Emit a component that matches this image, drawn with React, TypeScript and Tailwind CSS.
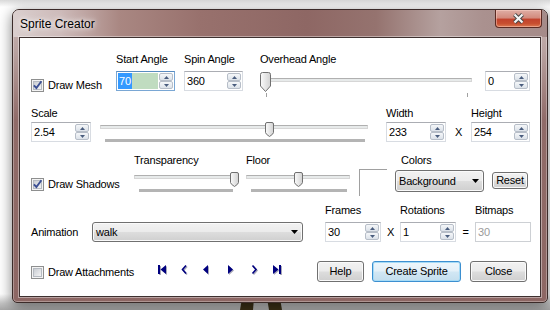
import React from 'react';

const face = 'bg-[linear-gradient(180deg,#f2f2f2_0%,#ebebeb_48%,#dddddd_52%,#cfcfcf_100%)]';

function CheckBox({ checked }: { checked?: boolean }) {
  return (
    <svg width="13" height="13" viewBox="0 0 13 13" className="shrink-0">
      <defs>
        <linearGradient id="cb-in" x1="0" y1="0" x2="1" y2="1">
          <stop offset="0" stopColor="#c6cad0" />
          <stop offset="1" stopColor="#f7f7f7" />
        </linearGradient>
      </defs>
      <rect x="0.5" y="0.5" width="12" height="12" fill="#f4f4f4" stroke="#8e8f8f" />
      <rect x="2.5" y="2.5" width="8" height="8" fill="url(#cb-in)" stroke="#b6bbc2" />
      {checked && <path d="M2.9 6.3 L5.4 9 L10.4 2.3" fill="none" stroke="#3b4f94" strokeWidth="1.9" />}
    </svg>
  );
}

function SpinButtons() {
  return (
    <div className="flex w-[15px] flex-col py-px pr-px">
      {['up', 'down'].map((d) => (
        <div
          key={d}
          className="flex h-[8px] items-center justify-center rounded-[2px] border border-[#b7bec8] bg-[linear-gradient(180deg,#f5f7f9,#dce2e9)]"
        >
          <svg width="5" height="3" viewBox="0 0 5 3">
            <path d={d === 'up' ? 'M0 3H5L2.5 0Z' : 'M0 0H5L2.5 3Z'} fill="#4a5d7e" />
          </svg>
        </div>
      ))}
    </div>
  );
}

function SpinBox({
  className,
  value,
  focused,
  disabled,
}: {
  className: string;
  value: string;
  focused?: boolean;
  disabled?: boolean;
}) {
  const border = focused
    ? 'border-[#7aa7d4] border-t-[#5a8cc0]'
    : disabled
      ? 'border-[#cdd0d4]'
      : 'border-[#d8dce2] border-t-[#abadb3]';
  return (
    <div className={`flex h-[20px] border bg-white ${border} ${className}`}>
      <div className="flex flex-1 p-px">
        <div className={`flex flex-1 items-center ${focused ? 'bg-[#c0dcc0]' : 'pl-px'}`}>
          {focused ? (
            <span className="flex h-full items-center bg-[#3399ff] px-px text-white">{value}</span>
          ) : (
            <span className={disabled ? 'text-[#9a9a9a]' : ''}>{value}</span>
          )}
        </div>
      </div>
      {!disabled && <SpinButtons />}
    </div>
  );
}

function Thumb({ big }: { big?: boolean }) {
  if (big) {
    return (
      <svg width="11" height="20" viewBox="0 0 11 20">
        <defs>
          <linearGradient id="th-big" x1="0" y1="0" x2="1" y2="0">
            <stop offset="0" stopColor="#fbfbfb" />
            <stop offset="1" stopColor="#d2d2d2" />
          </linearGradient>
        </defs>
        <path
          d="M0.5 2.5 Q0.5 0.5 2.5 0.5 H8.5 Q10.5 0.5 10.5 2.5 V14 L5.5 19.5 L0.5 14 Z"
          fill="url(#th-big)"
          stroke="#707070"
        />
      </svg>
    );
  }
  return (
    <svg width="9" height="15" viewBox="0 0 9 15">
      <defs>
        <linearGradient id="th-sm" x1="0" y1="0" x2="1" y2="0">
          <stop offset="0" stopColor="#fbfbfb" />
          <stop offset="1" stopColor="#d2d2d2" />
        </linearGradient>
      </defs>
      <path
        d="M0.5 2 Q0.5 0.5 2 0.5 H7 Q8.5 0.5 8.5 2 V10.5 Q8.5 12 4.5 14.5 Q0.5 12 0.5 10.5 Z"
        fill="url(#th-sm)"
        stroke="#707070"
      />
    </svg>
  );
}

function Slider({ className, thumb, big }: { className: string; thumb: number; big?: boolean }) {
  return (
    <div className={`relative ${big ? 'h-[27px]' : 'h-[23px]'} ${className}`}>
      <div
        className={`absolute right-0 h-[4px] border border-[#d6d6d6] border-t-[#b0b0b0] bg-[#e7eaea] ${
          big ? 'left-[4px] top-[7px]' : 'left-0 top-[5px]'
        }`}
      />
      <div className={`absolute ${big ? 'top-[1px]' : 'top-[2px]'}`} style={{ left: thumb }}>
        <Thumb big={big} />
      </div>
      {big ? (
        <>
          <div className="absolute left-[8px] top-[22px] h-[4px] w-px bg-[#a0a0a0]" />
          <div className="absolute right-[4px] top-[22px] h-[4px] w-px bg-[#a0a0a0]" />
        </>
      ) : (
        <div className="absolute left-[5px] right-[3px] top-[19px] h-[3px] bg-[#b4b4b4]" />
      )}
    </div>
  );
}

function Combo({ className, text }: { className: string; text: string }) {
  return (
    <div
      className={`flex items-center justify-between rounded-[3px] border border-[#707070] pl-[3px] pr-[4px] shadow-[inset_0_0_0_1px_#fafafa] ${face} ${className}`}
    >
      <span>{text}</span>
      <svg width="7" height="4" viewBox="0 0 7 4">
        <path d="M0 0H7L3.5 4Z" fill="#000" />
      </svg>
    </div>
  );
}

function Button({ className, children, primary }: { className: string; children: React.ReactNode; primary?: boolean }) {
  return (
    <div
      className={`flex items-center justify-center rounded-[3px] border ${
        primary
          ? 'border-[#3c8fd0] bg-[linear-gradient(180deg,#eef6fb_0%,#e4f0f8_48%,#d2e7f4_52%,#c4deee_100%)] shadow-[inset_0_0_0_1px_#a6dbf6]'
          : `border-[#707070] shadow-[inset_0_0_0_1px_#fafafa] ${face}`
      } ${className}`}
    >
      {children}
    </div>
  );
}

function Label({ children, className = '' }: { children: React.ReactNode; className?: string }) {
  return <span className={`h-[14px] leading-[14px] whitespace-nowrap ${className}`}>{children}</span>;
}

function CloseButton() {
  return (
    <div className="mr-[5px] flex h-[18px] w-[47px] items-center justify-center rounded-b-[4px] border border-t-0 border-[#5b2a22] bg-[linear-gradient(180deg,#dfaea5_0%,#d38b7e_45%,#c2432d_56%,#c84f30_80%,#dc7a52_100%)] shadow-[inset_0_0_0_1px_rgba(255,215,205,0.45)]">
      <svg width="13" height="11" viewBox="0 0 13 11">
        <path d="M2.5 1.5 L10.5 9.5 M10.5 1.5 L2.5 9.5" stroke="#444" strokeWidth="4" />
        <path d="M2.5 1.5 L10.5 9.5 M10.5 1.5 L2.5 9.5" stroke="#f4f4f4" strokeWidth="2.2" />
      </svg>
    </div>
  );
}

// frame navigation glyphs: first, prev step, prev, next, next step, last
const NAV = [
  { d: 'M1 1H3V10H1Z M9 1L3.5 5.5L9 10Z', stroke: false, ml: 'ml-0' },
  { d: 'M6 1.5L2.5 5.5L6 9.5', stroke: true, ml: 'ml-[12px]' },
  { d: 'M7 1L2 5.5L7 10Z', stroke: false, ml: 'ml-[10px]' },
  { d: 'M2 1L7 5.5L2 10Z', stroke: false, ml: 'ml-[14px]' },
  { d: 'M2.5 1.5L6 5.5L2.5 9.5', stroke: true, ml: 'ml-[13px]' },
  { d: 'M1 1L6.5 5.5L1 10Z M7 1H9V10H7Z', stroke: false, ml: 'ml-[11px]' },
];

function NavIcon({ d, stroke, ml }: { d: string; stroke: boolean; ml: string }) {
  const paint = (c: string) =>
    stroke ? { fill: 'none', stroke: c, strokeWidth: 1.6 } : { fill: c };
  return (
    <svg width="11" height="12" viewBox="0 0 11 12" className={ml}>
      <path d={d} transform="translate(1 1)" {...paint('#a8a8b8')} />
      <path d={d} {...paint('#00007f')} />
    </svg>
  );
}

export default function App() {
  return (
    <div className="relative h-[310px] w-[550px] overflow-hidden bg-[linear-gradient(180deg,#d9d9d9_0px,#ffffff_7px,#ffffff_294px,#c4c4c4_303px,#a6a6a6_310px)] pl-[12px] pt-[9px] font-['Liberation_Sans',Arial,sans-serif] text-[11px] tracking-[-0.2px] text-black">
      {/* sprite feet peeking out below the dialog */}
      <svg className="absolute left-[238px] top-[296px]" width="46" height="14" viewBox="0 0 46 14">
        <path d="M4 2H16L15 14H2Z" fill="#3a2f16" />
        <path d="M29 2H42L44 14H31Z" fill="#3a2f16" />
      </svg>

      <div className="relative flex h-[294px] w-[536px] flex-col rounded-t-[7px] rounded-b-[5px] border border-[#3b2b29] bg-[linear-gradient(180deg,#c9b6b5_0px,#b9a3a1_40px,#906b68_110px,#8d6764_100%)] shadow-[0_3px_14px_rgba(0,0,0,0.5),inset_0_0_0_1px_rgba(255,255,255,0.3)]">
        <div className="flex h-[27px] items-start justify-between rounded-t-[6px] bg-[linear-gradient(90deg,#dacfce_0%,#cdbab9_9%,#a98782_20%,#98716d_35%,#8e6764_55%,#95736f_68%,#b5a19f_80%,#aa918f_88%,#a58b89_100%)]">
          <span className="self-center pl-[7px] text-[12px] tracking-normal [text-shadow:0_0_8px_#fff,0_0_4px_#fff]">
            Sprite Creator
          </span>
          <CloseButton />
        </div>

        <div className="mx-[6px] mb-[5px] flex flex-1 flex-col border border-[#3e3130] bg-white pl-[11px] pt-[14px] shadow-[0_0_0_1px_rgba(255,255,255,0.4)]">
          {/* mesh */}
          <div className="flex h-[54px] items-start">
            <div className="mt-[25px] flex w-[85px] items-center gap-[4px]">
              <CheckBox checked />
              <span>Draw Mesh</span>
            </div>
            <div className="flex w-[68px] flex-col">
              <Label>Start Angle</Label>
              <SpinBox className="mt-[5px] w-[59px]" value="70" focused />
            </div>
            <div className="flex w-[74px] flex-col">
              <Label>Spin Angle</Label>
              <SpinBox className="mt-[5px] w-[59px]" value="360" />
            </div>
            <div className="flex w-[227px] flex-col">
              <Label className="pl-[2px]">Overhead Angle</Label>
              <Slider big className="mt-[5px] w-[214px]" thumb={2} />
            </div>
            <SpinBox className="mt-[19px] w-[45px]" value="0" />
          </div>

          {/* scale */}
          <div className="flex h-[47px] items-start">
            <div className="flex w-[69px] flex-col">
              <Label>Scale</Label>
              <SpinBox className="mt-[2px] w-[60px]" value="2.54" />
            </div>
            <Slider className="mt-[14px] w-[268px]" thumb={165} />
            <div className="ml-[18px] flex w-[60px] flex-col">
              <Label>Width</Label>
              <SpinBox className="mt-[2px] w-[60px]" value="233" />
            </div>
            <span className="mt-[16px] flex h-[20px] w-[25px] items-center justify-center">X</span>
            <div className="flex w-[59px] flex-col">
              <Label>Height</Label>
              <SpinBox className="mt-[2px] w-[59px]" value="254" />
            </div>
          </div>

          {/* shadows */}
          <div className="flex h-[50px] items-start">
            <div className="mt-[23px] flex w-[103px] items-center gap-[4px]">
              <CheckBox checked />
              <span>Draw Shadows</span>
            </div>
            <div className="flex w-[112px] flex-col">
              <Label>Transparency</Label>
              <Slider className="mt-[3px] w-[102px]" thumb={96} />
            </div>
            <div className="flex w-[113px] flex-col">
              <Label>Floor</Label>
              <Slider className="mt-[3px] w-[104px]" thumb={48} />
            </div>
            <div className="mt-[16px] h-[27px] w-[28px] border-l border-t border-[#a0a0a0]" />
            <div className="ml-[8px] flex w-[89px] flex-col">
              <Label className="pl-[6px]">Colors</Label>
              <Combo className="mt-[3px] h-[22px] w-[89px]" text="Background" />
            </div>
            <Button className="ml-[8px] mt-[19px] h-[17px] w-[36px]">Reset</Button>
          </div>

          {/* animation */}
          <div className="flex h-[58px] items-start">
            <div className="mt-[19px] flex h-[20px] w-[61px] items-center">Animation</div>
            <Combo className="mt-[19px] h-[20px] w-[211px]" text="walk" />
            <div className="ml-[22px] flex w-[56px] flex-col">
              <Label>Frames</Label>
              <SpinBox className="mt-[5px] w-[56px]" value="30" />
            </div>
            <span className="mt-[19px] flex h-[20px] w-[19px] items-center justify-center">X</span>
            <div className="flex w-[56px] flex-col">
              <Label>Rotations</Label>
              <SpinBox className="mt-[5px] w-[56px]" value="1" />
            </div>
            <span className="mt-[19px] flex h-[20px] w-[19px] items-center justify-center">=</span>
            <div className="flex w-[56px] flex-col">
              <Label>Bitmaps</Label>
              <SpinBox className="mt-[5px] w-[56px]" value="30" disabled />
            </div>
          </div>

          {/* footer */}
          <div className="flex h-[21px] items-start justify-between pr-[13px]">
            <div className="flex items-start">
              <div className="mt-[3px] flex w-[126px] items-center gap-[4px]">
                <CheckBox />
                <span>Draw Attachments</span>
              </div>
              <div className="mt-[3px] flex">
                {NAV.map((n, i) => (
                  <NavIcon key={i} {...n} />
                ))}
              </div>
            </div>
            <div className="flex">
              <Button className="h-[21px] w-[47px]">Help</Button>
              <Button primary className="ml-[8px] h-[21px] w-[89px]">
                Create Sprite
              </Button>
              <Button className="ml-[9px] h-[21px] w-[57px]">Close</Button>
            </div>
          </div>
        </div>
      </div>
    </div>
  );
}
